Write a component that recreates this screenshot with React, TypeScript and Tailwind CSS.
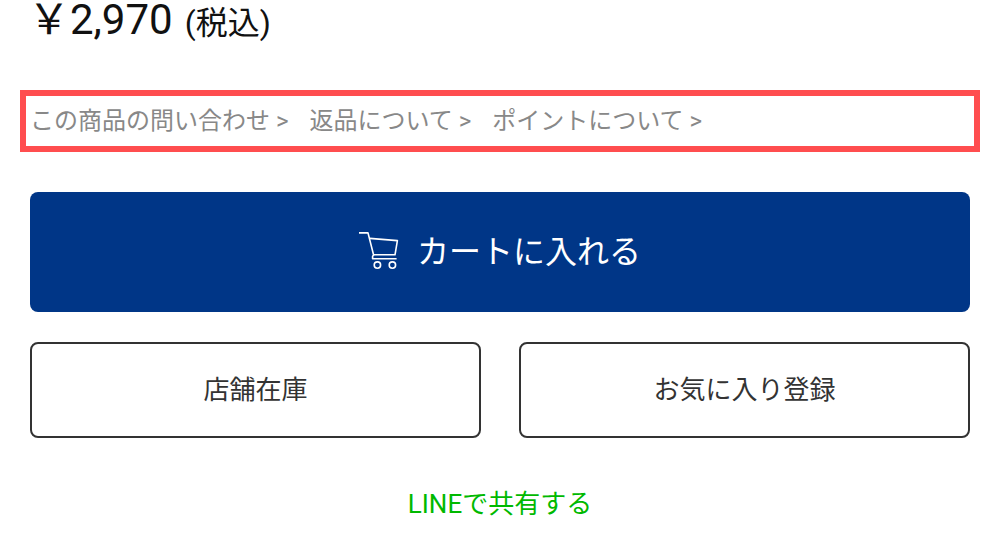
const links = [
  { label: "この商品の問い合わせ", href: "#contact" },
  { label: "返品について", href: "#returns" },
  { label: "ポイントについて", href: "#points" },
];

function CartIcon() {
  return (
    <svg
      className="h-10 w-10"
      viewBox="0 0 40 40"
      fill="none"
      stroke="currentColor"
      strokeWidth="1.6"
      strokeLinejoin="round"
      aria-hidden="true"
    >
      <path d="M0 .9h9l5.6 22.1-1 1.2v2.6h24" />
      <path d="M10.8 6.4 38.4 8.6 36 22.8H14.6" />
      <circle cx="18.4" cy="33.1" r="3.2" />
      <circle cx="33.4" cy="33.1" r="3.2" />
    </svg>
  );
}

export default function App() {
  return (
    <main className="bg-white px-5 pb-10 font-[Roboto,'Noto_Sans_CJK_JP',sans-serif] text-[#333]">
      <p className="flex items-baseline gap-3 px-2 leading-10 text-[#111]">
        <span className="text-[42px]">￥2,970</span>
        <span className="text-[32px]">(税込)</span>
      </p>

      <nav className="mt-[47px] flex gap-[21px] border-6 border-[#ff4d4f] px-1 py-2 text-2xl leading-[34px] text-[#888]">
        {links.map((link) => (
          <a key={link.href} href={link.href}>
            {link.label} &gt;
          </a>
        ))}
      </nav>

      <div className="mt-10 px-2.5">
        <button
          type="button"
          className="flex h-30 w-full items-center justify-center gap-[18px] rounded-lg bg-[#003687] text-[32px] text-white"
        >
          <CartIcon />
          カートに入れる
        </button>

        <div className="mt-[30px] grid grid-cols-2 gap-[38px]">
          <button type="button" className="h-24 rounded-lg border-2 border-[#333] text-[26px]">
            店舗在庫
          </button>
          <button type="button" className="h-24 rounded-lg border-2 border-[#333] text-[26px]">
            お気に入り登録
          </button>
        </div>

        <div className="mt-[47px] text-center">
          <a href="#line" className="text-[26px] text-[#00b900]">
            LINEで共有する
          </a>
        </div>
      </div>
    </main>
  );
}
